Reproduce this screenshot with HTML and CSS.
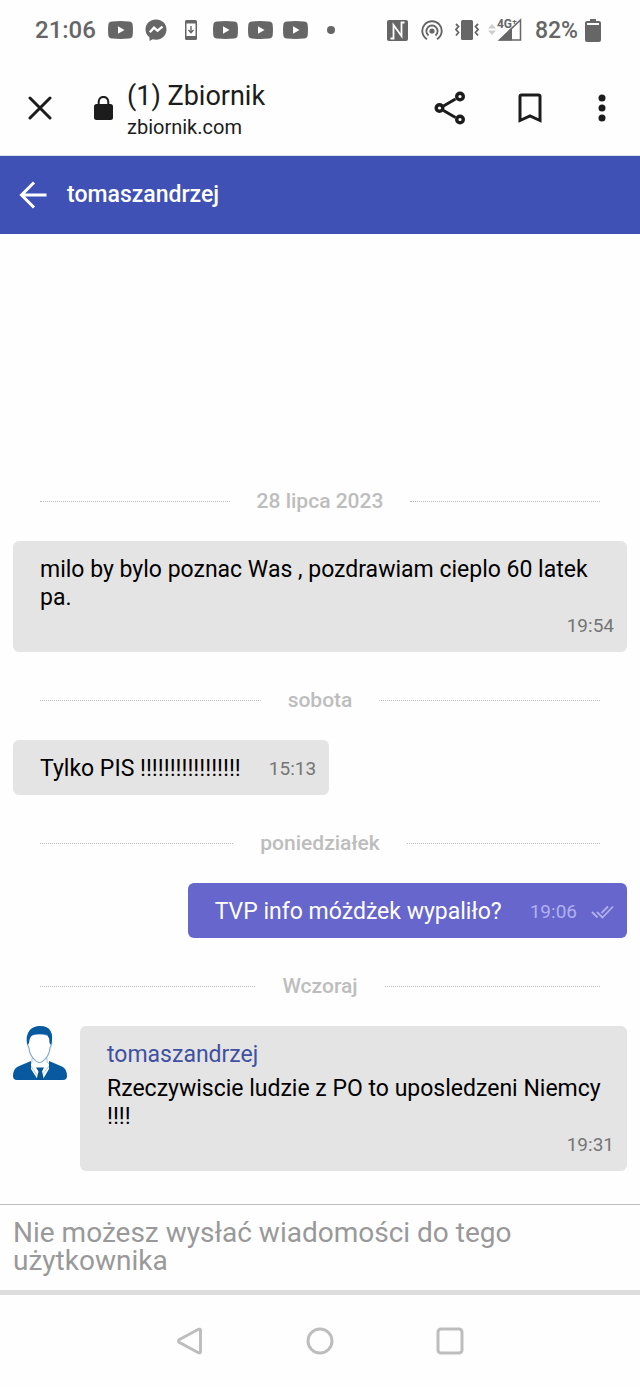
FILE: index.html
```html
<!DOCTYPE html>
<html lang="pl">
<head>
<meta charset="utf-8">
<meta name="viewport" content="width=device-width, initial-scale=1">
<title>(1) Zbiornik</title>
<link rel="stylesheet" href="styles.css">
</head>
<body>
<svg class="defs" aria-hidden="true">
  <symbol id="play" viewBox="0 0 25 18"><path fill="currentColor" fill-rule="evenodd" d="M4 .5Q12.500-.3 21 .5Q24.500.8 24.700 4Q25.200 9 24.700 14Q24.500 17.200 21 17.500Q12.500 18.300 4 17.500Q.5 17.200.3 14Q-.2 9 .3 4Q.5.800 4 .5ZM10 5.200V12.800L16.500 9Z"/></symbol>
</svg>
<div class="screen">
  <div class="status">
    <span class="clock">21:06</span>
    <div class="status-group">
      <span class="slot"><svg width="25" height="18"><use href="#play"/></svg></span>
      <span class="slot"><svg width="22" height="22" viewBox="0 0 22 22"><path fill="currentColor" d="M11 .5C5 .5.500 4.700.5 10.500c0 3.200 1.500 6 4 7.800V22l3.200-1.800c1 .3 2.200.5 3.300.5 6 0 10.500-4.500 10.500-10.200S17 .5 11 .5Z"/><path d="m4.800 13.300 4.200-4.600 3.500 3 5-4" fill="none" stroke="#fff" stroke-width="2.300"/></svg></span>
      <span class="slot"><svg width="12" height="20" viewBox="0 0 12 20"><rect width="12" height="20" rx="1.500" fill="currentColor"/><path fill="#fff" d="M1.500 3.500h9v12.500h-9z"/><path d="M6 6v7M3.500 10 6 12.700 8.500 10" fill="none" stroke="currentColor" stroke-width="1.400"/></svg></span>
      <span class="slot"><svg width="25" height="18"><use href="#play"/></svg></span>
      <span class="slot"><svg width="25" height="18"><use href="#play"/></svg></span>
      <span class="slot"><svg width="25" height="18"><use href="#play"/></svg></span>
      <span class="slot"><svg width="8" height="8"><circle cx="4" cy="4" r="4" fill="currentColor"/></svg></span>
    </div>
    <div class="status-group status-right">
      <span class="slot"><svg width="21" height="21" viewBox="0 0 21 21"><path fill="currentColor" d="M2 0h17q2 0 2 2v17q0 2-2 2H2q-2 0-2-2V2Q0 0 2 0Z"/><path d="M3.500 18.500h3V5l8 11V2.500h3" fill="none" stroke="#fff" stroke-width="1.800"/></svg></span>
      <span class="slot"><svg width="22" height="22" viewBox="0 0 22 22" fill="none" stroke="currentColor" stroke-width="1.900"><circle cx="11" cy="12" r="2.600" fill="currentColor" stroke="none"/><path d="M7.500 16.500a5.600 5.600 0 1 1 7 0M6 20.200a9.700 9.700 0 1 1 10 0"/></svg></span>
      <span class="slot"><svg width="24" height="20" viewBox="0 0 24 20"><rect x="6" width="12" height="20" rx="1.500" fill="currentColor"/><path d="M1 4l2.500 2.500L1 9.500l2.500 3L1 15.500M23 4l-2.500 2.500 2.500 3-2.500 3 2.500 3" fill="none" stroke="currentColor" stroke-width="1.800"/></svg></span>
      <span class="signal"><svg width="35" height="24" viewBox="0 0 35 24"><path d="m0 10.500 4-4.500 4 4.500ZM0 12.500h8l-4 4.500Z" fill="#ccc"/><path d="M32.500 2v20H11.500Z" fill="none" stroke="currentColor" stroke-width="1.500"/><path d="M11 22.500 24 10v12.500Z" fill="currentColor"/></svg><b class="network">4G⁺</b></span>
      <span class="charge">82%</span>
      <svg width="16" height="23" viewBox="0 0 16 23"><path d="M5 0h6v2h3q2 0 2 2v17q0 2-2 2H2q-2 0-2-2V4Q0 2 2 2h3Z" fill="currentColor"/><path fill="#fff" d="M2 4h12v2H2z"/></svg>
    </div>
  </div>
  <header class="browser">
    <button class="icon-button" aria-label="Zamknij"><svg width="24" height="24" viewBox="0 0 24 24"><path d="m2 2 20 20M22 2 2 22" stroke="currentColor" stroke-width="3" stroke-linecap="round"/></svg></button>
    <svg class="lock" width="19" height="24" viewBox="0 0 19 24"><rect y="8" width="19" height="16" rx="2.500" fill="currentColor"/><path d="M4.700 9V5.700a4.800 4.800 0 0 1 9.600 0V9" fill="none" stroke="currentColor" stroke-width="2"/></svg>
    <div class="page">
      <div class="page-title">(1) Zbiornik</div>
      <div class="page-host">zbiornik.com</div>
    </div>
    <div class="actions">
      <button class="icon-button" aria-label="Udostępnij"><svg width="32" height="34" viewBox="0 0 32 34" fill="none" stroke="currentColor" stroke-width="3.400"><path stroke-width="3" d="m9.500 15 12-7M9.500 19.500l12 7"/><circle cx="5.500" cy="17" r="3.300"/><circle cx="26" cy="5.500" r="3.300"/><circle cx="26" cy="28.500" r="3.300"/></svg></button>
      <button class="icon-button" aria-label="Dodaj zakładkę"><svg width="24" height="30" viewBox="0 0 24 30"><path d="M2 27.500V3.500Q2 2 3.500 2h17Q22 2 22 3.500v24l-10-4.500Z" fill="none" stroke="currentColor" stroke-width="3"/></svg></button>
      <button class="icon-button" aria-label="Więcej"><svg width="8" height="28" viewBox="0 0 8 28" fill="currentColor"><circle cx="4" cy="4" r="3.500"/><circle cx="4" cy="14" r="3.500"/><circle cx="4" cy="24" r="3.500"/></svg></button>
    </div>
  </header>
  <header class="chat-head">
    <button class="icon-button" aria-label="Wstecz"><svg width="28" height="28" viewBox="0 0 28 28"><path d="M15 1.500 2.500 14 15 26.500M2.500 14H27.500" fill="none" stroke="currentColor" stroke-width="3"/></svg></button>
    <h1 class="chat-name">tomaszandrzej</h1>
  </header>
  <main class="chat">
    <div class="day">28 lipca 2023</div>
    <div class="message"><div class="bubble"><p class="text">milo by bylo poznac Was , pozdrawiam cieplo 60 latek pa.</p><time class="time">19:54</time></div></div>
    <div class="day">sobota</div>
    <div class="message"><div class="bubble"><p class="text">Tylko PIS !!!!!!!!!!!!!!!!!</p><time class="time">15:13</time></div></div>
    <div class="day">poniedziałek</div>
    <div class="message own"><div class="bubble"><p class="text">TVP info móżdżek wypaliło?</p><time class="time">19:06</time><svg class="ticks" width="23" height="14" viewBox="0 0 23 14" fill="none" stroke="currentColor" stroke-width="1.800"><path d="m1 7 5.500 5.500M6 7l5.500 5.500L22 1.500M10.500 8 17 1.500"/></svg></div></div>
    <div class="day">Wczoraj</div>
    <div class="message">
      <svg class="avatar" width="54" height="54" viewBox="0 0 54 54">
        <path fill="#fff" stroke="#a9c6e2" d="M19 32v4l-2 3 9.500 13L37 39l-3-3v-4Z"/>
        <path fill="#fff" stroke="#7fa9d2" stroke-width="1.200" d="M15.500 13q-2.500 3 .5 9 .5 6 4 10 3.500 4.500 6.500 4.500t6.500-4.500q3.500-4 4-10 3-6 .5-9-1-5-11-5t-11 5Z"/>
        <path fill="#075a9f" d="M14.500 19Q12 10 16.500 4.500 20 0 27 0q8 0 10.500 5 3 5 .500 14l-1.500-2q0-5-2-8-7.500-2-15 0-3 2-3.500 8Z"/>
        <path fill="#075a9f" d="M18 35 5 40.500Q0 43 0 50q0 4 4 4h21l-7-11ZM36 35l13 5.500q5 2.500 5 9.500 0 4-4 4H29.500L36 43Z"/>
        <path fill="#075493" d="M23 41.500h8l-2 4 2 8.500h-7.500l2-8.500Z"/>
      </svg>
      <div class="bubble"><a class="author" href="#">tomaszandrzej</a><p class="text">Rzeczywiscie ludzie z PO to uposledzeni Niemcy !!!!</p><time class="time">19:31</time></div>
    </div>
  </main>
  <div class="composer">Nie możesz wysłać wiadomości do tego użytkownika</div>
  <nav class="system">
    <button class="icon-button" aria-label="Wstecz"><svg width="28" height="28" viewBox="0 0 28 28"><path d="M3.500 12.500 22 2.500q2.500-1 2.500 1v21q0 2-2.500 1L3.500 15.500q-2-1.500 0-3Z" fill="none" stroke="currentColor" stroke-width="3"/></svg></button>
    <button class="icon-button" aria-label="Ekran główny"><svg width="28" height="28"><circle cx="14" cy="14" r="12" fill="none" stroke="currentColor" stroke-width="3"/></svg></button>
    <button class="icon-button" aria-label="Ostatnie"><svg width="28" height="28"><rect x="2" y="2" width="24" height="24" rx="3" fill="none" stroke="currentColor" stroke-width="3"/></svg></button>
  </nav>
</div>
</body>
</html>
```
FILE: styles.css
```css
* { box-sizing: border-box; }
body { margin: 0; background: #fefefe; color: #000; font-family: Roboto, "Liberation Sans", sans-serif; }
svg { display: block; flex: none; }
.defs { position: absolute; width: 0; height: 0; }
.screen { display: flex; flex-direction: column; min-height: 100vh; }
.icon-button { display: flex; align-items: center; justify-content: center; width: 32px; height: 48px; padding: 0; border: 0; background: none; color: inherit; }

.status { display: flex; align-items: center; height: 60px; padding: 0 39px 0 35px; color: #666; font-size: 24px; font-weight: 500; }
.clock { width: 68px; }
.status-group { display: flex; align-items: center; }
.status-right { margin-left: auto; }
.slot { display: flex; justify-content: center; width: 35px; }
.signal { position: relative; margin-left: 3px; }
.network { position: absolute; top: -2px; left: 9px; font-size: 12px; line-height: 16px; font-weight: 700; }
.charge { margin: 0 7px 0 12px; font-size: 23px; }

.browser { display: flex; align-items: center; height: 96px; padding: 0 22px 0 24px; border-bottom: 1px solid #dcdff0; color: #1c1c1c; }
.lock { margin-left: 38px; }
.page { margin-left: 14px; padding-top: 4px; }
.page-title { font-size: 27px; line-height: 34px; }
.page-host { font-size: 20px; line-height: 28px; }
.actions { display: flex; gap: 48px; margin-left: auto; }
.actions .icon-button:last-child { margin-left: -8px; }

.chat-head { display: flex; align-items: center; gap: 18px; height: 78px; padding: 0 17px; background: #3f51b5; color: #fff; }
.chat-name { margin: 0; font-size: 23px; font-weight: 500; line-height: 28px; }

.chat { display: flex; flex: 1; flex-direction: column; justify-content: flex-end; padding: 0 13px 33px; }
.day { display: flex; align-items: center; gap: 27px; margin: 0 27px 26px; color: #bdbdbd; font-size: 21px; font-weight: 500; line-height: 28px; }
.day::before, .day::after { content: ""; flex: 1; border-top: 1px dotted #bbb; }
.message { display: flex; align-items: flex-start; gap: 13px; }
.message + .day { margin-top: 34px; }
.own { justify-content: flex-end; }
.bubble { display: flex; flex-wrap: wrap; align-items: center; column-gap: 28px; padding: 15px 13px 12px 27px; border-radius: 6px; background: #e4e4e4; font-size: 23px; line-height: 28px; }
.text { margin: 0; }
.time { margin-left: auto; color: #757575; font-size: 19px; }
.own .bubble { background: #6666cc; color: #fff; }
.own .time { color: #b0b0f0; }
.ticks { margin-left: -14px; color: #b0b0f0; }
.author { width: 100%; margin-bottom: 6px; color: #3f51a0; text-decoration: none; }

.composer { padding: 14px 13px 15px; border-top: 1px solid #bdbdbd; border-bottom: 5px solid #ddd; color: #999; font-size: 28px; line-height: 28px; }
.system { display: flex; align-items: center; justify-content: center; gap: 98px; height: 92px; color: #bdbdbd; }
```
